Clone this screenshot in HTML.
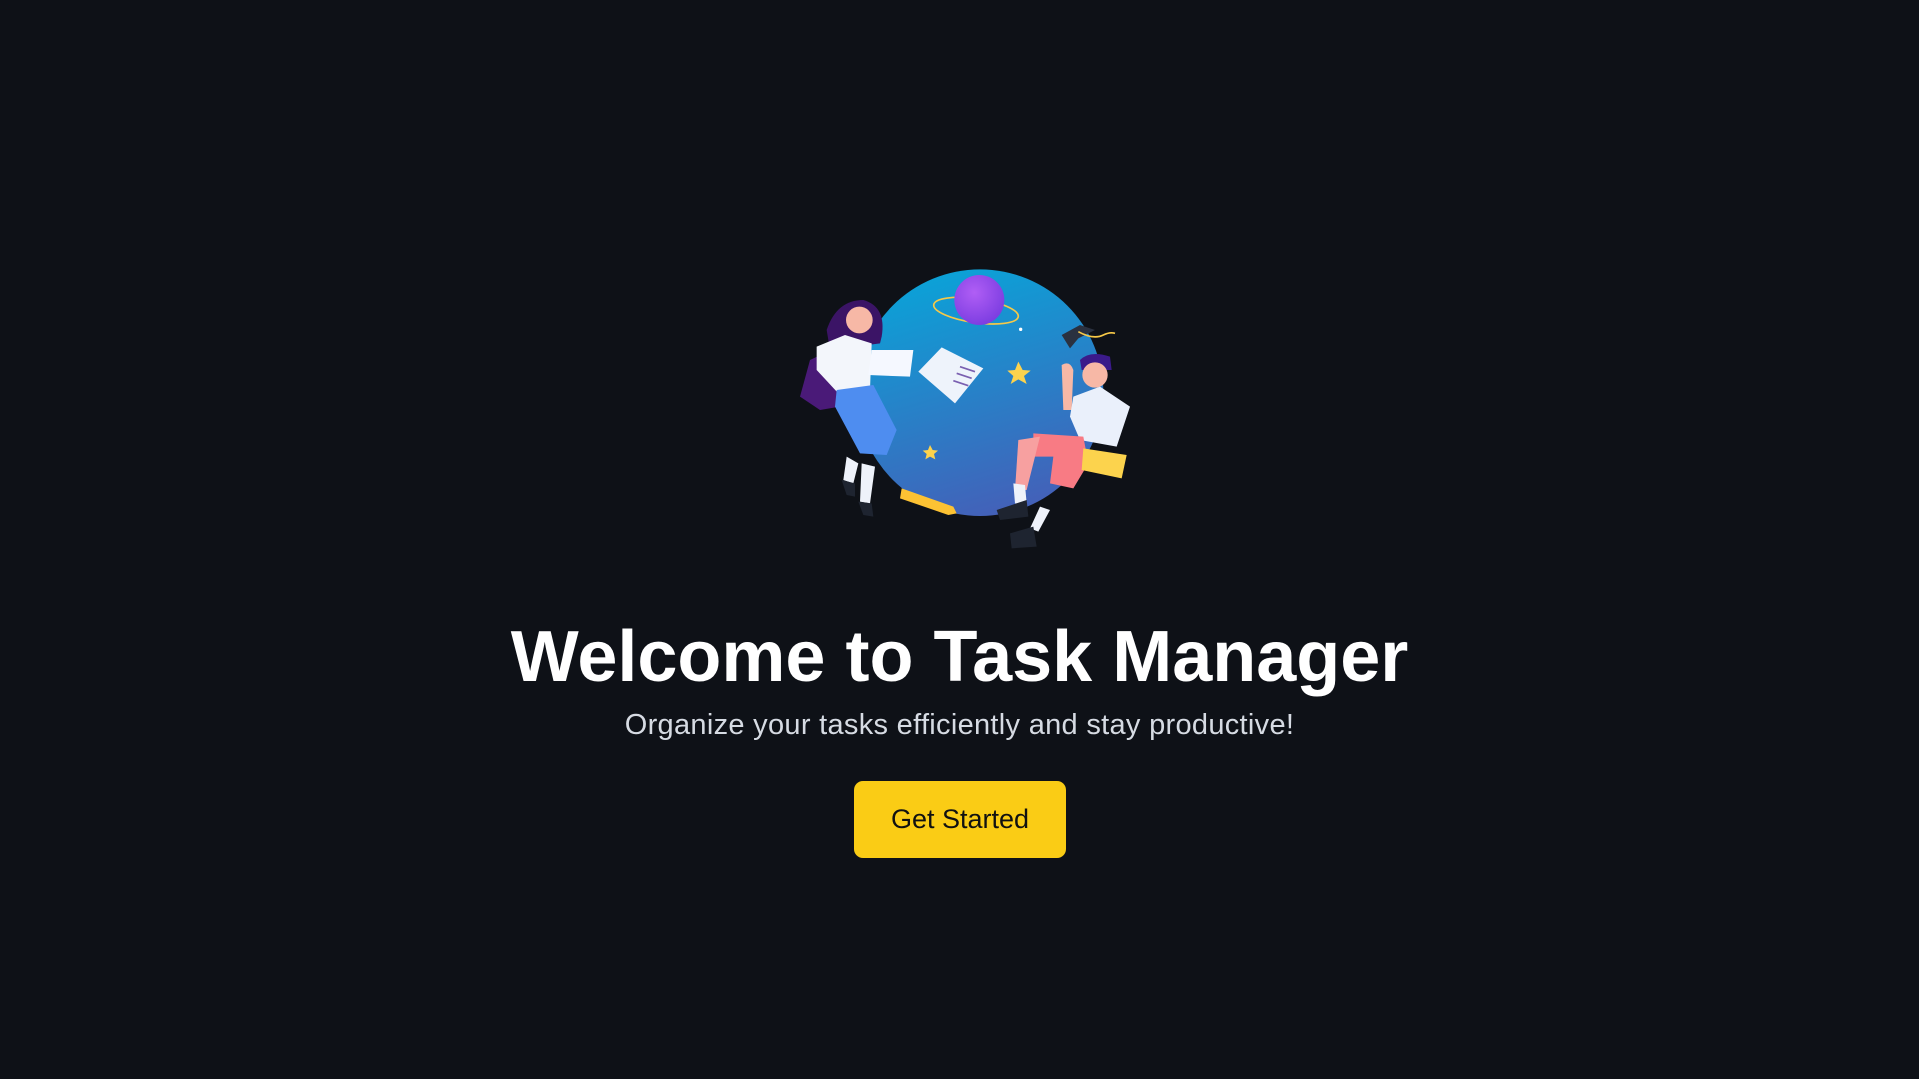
<!DOCTYPE html>
<html><head><meta charset="utf-8"><style>
html,body{margin:0;padding:0;width:1919px;height:1079px;background:#0e1117;overflow:hidden;font-family:"Liberation Sans",sans-serif}
svg{position:absolute;left:780px;top:250px}
h1{position:absolute;left:0;width:1919px;top:612px;margin:0;text-align:center;color:#fff;font-size:72px;font-weight:bold;line-height:90px}
p{position:absolute;left:0;width:1919px;top:706px;margin:0;text-align:center;color:#d6dbe3;font-size:29px;line-height:38px;letter-spacing:0.3px}
.btn{position:absolute;left:854px;top:781px;width:212px;height:77px;background:#facc15;border-radius:9px;color:#111;font-size:27px;line-height:77px;text-align:center}
</style></head><body>
<svg width="380" height="310" viewBox="0 0 1140 930">
<defs>
<linearGradient id="g" x1="0.3" y1="0" x2="0.6" y2="1"><stop offset="0" stop-color="#0aa3d8"/><stop offset="1" stop-color="#4460b8"/></linearGradient>
<radialGradient id="p" cx="0.4" cy="0.35" r="0.7"><stop offset="0" stop-color="#b05ef5"/><stop offset="1" stop-color="#7a3ce0"/></radialGradient>
</defs>
<circle cx="600" cy="428" r="370" fill="url(#g)"/>
<ellipse cx="588" cy="182" rx="128" ry="36" fill="none" stroke="#f7c948" stroke-width="5" transform="rotate(8 588 182)"/>
<circle cx="598" cy="150" r="75" fill="url(#p)"/>
<circle cx="722" cy="238" r="5" fill="#fff"/>
<path d="M415 365 L485 292 L610 355 L525 460 Z" fill="#eef3fb"/>
<path d="M540 350 L585 365 M530 370 L575 385 M520 392 L565 407" stroke="#7a5fb0" stroke-width="5"/>
<path d="M715 335 L728 360 L752 362 L732 378 L740 402 L715 388 L692 402 L700 378 L682 362 L705 360Z" fill="#fcd34d"/>
<path d="M450 585 L458 600 L474 602 L462 612 L466 628 L450 620 L436 628 L440 612 L428 602 L444 600Z" fill="#fcd34d"/>
<path d="M365 715 L520 770 L530 790 L505 795 L360 745Z" fill="#fcc233"/>
<path d="M845 255 L900 225 L945 240 L895 265 L870 295 Z" fill="#2a3140"/>
<path d="M895 245 Q940 270 970 255 Q990 245 1005 250" stroke="#f7c948" stroke-width="5" fill="none"/>
<path d="M140 240 Q170 150 250 150 Q320 170 305 260 L300 280 L150 300Z" fill="#3b1466"/>
<circle cx="238" cy="210" r="40" fill="#f7b8a6"/>
<path d="M60 440 L90 330 L175 290 L180 470 L120 480Z" fill="#4a1a78"/>
<path d="M110 290 L195 255 L275 280 L270 420 L175 430 L110 360Z" fill="#f3f6fb"/>
<path d="M275 300 L400 300 L390 380 L265 375Z" fill="#f5f8ff"/>
<path d="M170 420 L280 405 L350 540 L320 615 L240 610 L165 470Z" fill="#4e8df0"/>
<path d="M200 620 L235 640 L220 700 L190 690Z M245 640 L285 650 L270 760 L240 755Z" fill="#eef2fa"/>
<path d="M185 690 L225 700 L225 740 L200 735Z M235 755 L275 760 L280 800 L250 795Z" fill="#1e2430"/>
<path d="M900 330 Q930 300 990 320 L995 360 L905 360Z" fill="#3b1a8a"/>
<circle cx="945" cy="375" r="38" fill="#f7b8a6"/>
<path d="M845 345 Q870 330 880 360 L875 480 L850 480Z" fill="#f7b8a6"/>
<path d="M880 440 L960 410 L1050 470 L1010 590 L900 570 L870 500Z" fill="#eaf0fb"/>
<path d="M760 550 L910 560 L925 640 L880 715 L810 700 L820 620 L760 620Z" fill="#f87b84"/>
<path d="M715 570 L780 560 L740 720 L705 720Z" fill="#f7a0a0"/>
<path d="M910 595 L1040 615 L1025 685 L905 660Z" fill="#fcd34d"/>
<path d="M700 700 L735 705 L740 760 L705 760Z M780 770 L810 780 L775 845 L750 835Z" fill="#eef2fa"/>
<path d="M650 780 L740 750 L745 800 L660 810Z M690 850 L760 830 L770 890 L695 895Z" fill="#1e2430"/>
</svg>
<h1>Welcome to Task Manager</h1>
<p>Organize your tasks efficiently and stay productive!</p>
<div class="btn">Get Started</div>
</body></html>
